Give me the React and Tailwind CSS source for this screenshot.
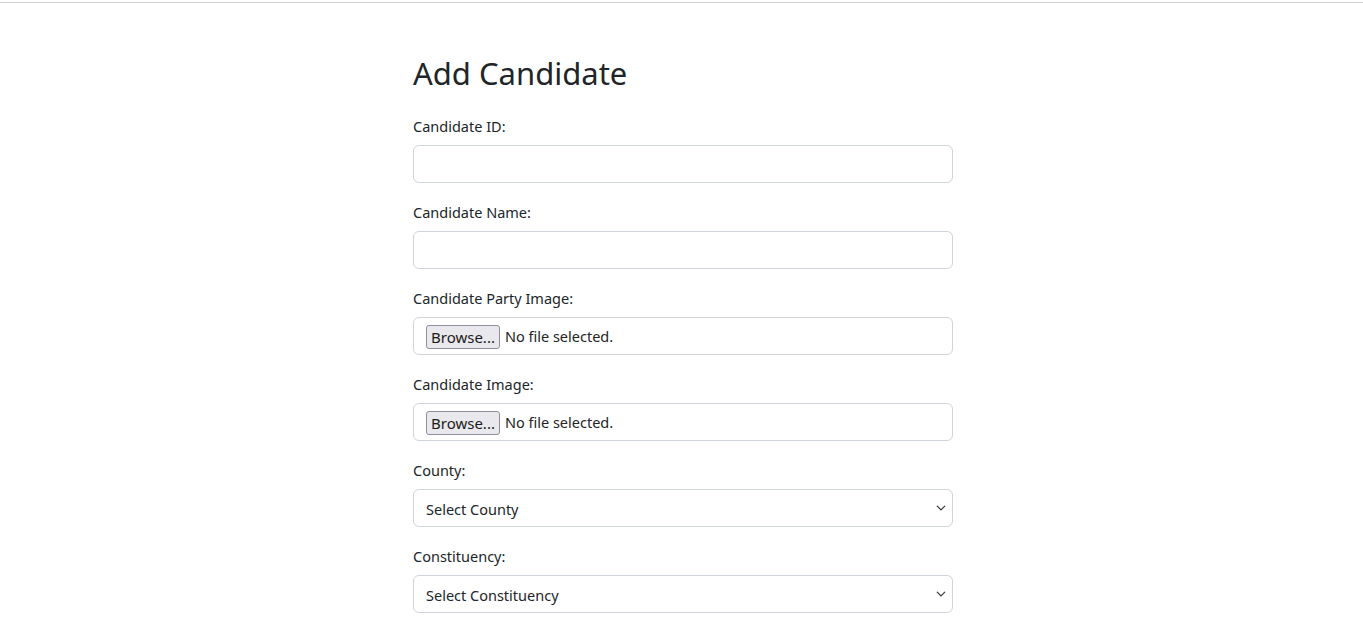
import { useState } from "react";

const Chevron = () => (
    <svg
        className="pointer-events-none absolute right-[7px] top-1/2 -translate-y-1/2"
        width="10"
        height="10"
        viewBox="0 0 16 16"
        fill="none"
    >
        <path
            d="M2 5l6 6 6-6"
            stroke="#343a40"
            strokeWidth="2"
            strokeLinecap="round"
            strokeLinejoin="round"
        />
    </svg>
);

function FileField() {
    return (
        <div className="flex h-[38px] w-full items-center rounded-[6px] border border-[#ced4da] bg-white pl-[12px] pt-[2px]">
            <button
                type="button"
                className="h-[24px] rounded-[3px] border border-[#8f8f9d] bg-[#e9e9ed] px-[4px] text-[15px] leading-[20px] text-[#1b1b1b]"
            >
                Browse...
            </button>
            <span className="ml-[5px] text-[14.5px] text-[#212529]">No file selected.</span>
        </div>
    );
}

function SelectField({ name, value, onChange, placeholder }) {
    return (
        <div className="relative">
            <select
                name={name}
                value={value}
                onChange={onChange}
                className="h-[38px] w-full appearance-none rounded-[6px] border border-[#ced4da] bg-white pl-[12px] pr-[36px] pt-[3px] text-[14.5px] text-[#212529] outline-none"
            >
                <option value="">{placeholder}</option>
            </select>
            <Chevron />
        </div>
    );
}

function App() {
    const [form, setForm] = useState({
        candidateId: "",
        candidateName: "",
        county: "",
        constituency: "",
    });

    const handleChange = (e) => {
        setForm({ ...form, [e.target.name]: e.target.value });
    };

    const labelClass = "mb-[7px] block text-[14.5px] leading-[24px] text-[#212529]";
    const inputClass =
        "h-[38px] w-full rounded-[6px] border border-[#ced4da] bg-white px-[12px] text-[15px] text-[#212529] outline-none";

    return (
        <div
            className="min-h-[625px] bg-white text-[#212529]"
            style={{ fontFamily: "'Noto Sans', 'Open Sans', sans-serif" }}
        >
            <div className="h-[2px]" />
            <div className="h-px bg-[#d0d0d0]" />
            <div className="flex justify-center pl-[3px]">
                <div className="w-[540px] pt-[51px]">
                    <h2 className="mb-[22px] text-[31px] leading-[38px] font-normal">Add Candidate</h2>
                    <form>
                        <div className="mb-[17px]">
                            <label className={labelClass}>Candidate ID:</label>
                            <input
                                type="text"
                                name="candidateId"
                                value={form.candidateId}
                                onChange={handleChange}
                                className={inputClass}
                            />
                        </div>
                        <div className="mb-[17px]">
                            <label className={labelClass}>Candidate Name:</label>
                            <input
                                type="text"
                                name="candidateName"
                                value={form.candidateName}
                                onChange={handleChange}
                                className={inputClass}
                            />
                        </div>
                        <div className="mb-[17px]">
                            <label className={labelClass}>Candidate Party Image:</label>
                            <FileField />
                        </div>
                        <div className="mb-[17px]">
                            <label className={labelClass}>Candidate Image:</label>
                            <FileField />
                        </div>
                        <div className="mb-[17px]">
                            <label className={labelClass}>County:</label>
                            <SelectField
                                name="county"
                                value={form.county}
                                onChange={handleChange}
                                placeholder="Select County"
                            />
                        </div>
                        <div className="mb-[17px]">
                            <label className={labelClass}>Constituency:</label>
                            <SelectField
                                name="constituency"
                                value={form.constituency}
                                onChange={handleChange}
                                placeholder="Select Constituency"
                            />
                        </div>
                    </form>
                </div>
            </div>
        </div>
    );
}

export default App;
